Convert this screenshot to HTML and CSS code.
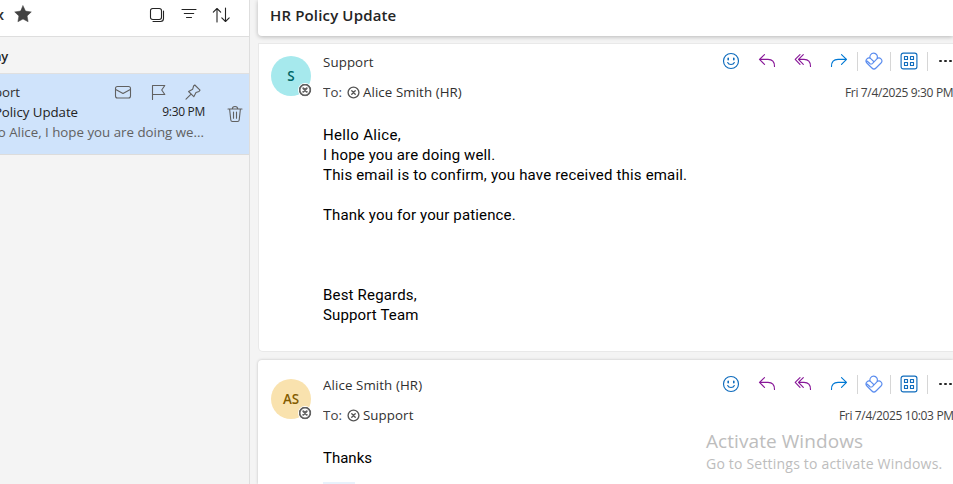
FILE: index.html
```html
<!DOCTYPE html>
<html lang="en">
<head>
<meta charset="utf-8">
<title>Mail</title>
<link rel="stylesheet" href="styles.css">
</head>
<body>
<svg class="defs" width="0" height="0" aria-hidden="true">
  <symbol id="smile" viewBox="0 0 18 18"><circle cx="9" cy="9" r="7.5"/><path d="M5.7 10.5c.9 2.6 5.7 2.6 6.6 0"/><path d="M6.2 6.2v1.6M11.8 6.2v1.6" stroke-width="1.6"/></symbol>
  <symbol id="reply" viewBox="0 0 18 18"><path d="M6.5 2.6 1.5 7.4l5 5M1.8 7.4H10q6.5 0 6.5 7"/></symbol>
  <symbol id="replyall" viewBox="0 0 18 18"><path d="M6 2.6 1.2 7.4l4.8 5M9.3 2.6 4.5 7.4l4.8 5M4.8 7.4H10q6.5 0 6.5 7"/></symbol>
  <symbol id="forward" viewBox="0 0 18 18"><path d="m11.5 2.6 5 4.8-5 5M16.2 7.4H8q-6.5 0-6.5 7"/></symbol>
  <symbol id="loop" viewBox="0 0 18 18"><path d="M5.2 6.2A3.7 3.7 0 1 1 12 6.4M8.7 9.5 6 6.9a2.9 2.9 0 0 0-4.1 4.1l5 5a2.9 2.9 0 0 0 4.1 0l5-5a2.9 2.9 0 0 0-4.1-4.1l-4.3 4.4a2.2 2.2 0 0 1-3 0L2 9"/></symbol>
  <symbol id="apps" viewBox="0 0 18 18"><rect x="1.1" y="1.1" width="15.8" height="15.8" rx="2.2"/><path d="M4.5 4.5h3v3h-3zM10.5 4.5h3v3h-3zM4.5 10.5h3v3h-3zM10.5 10.5h3v3h-3z"/></symbol>
  <symbol id="away" viewBox="0 0 12 12"><circle cx="6" cy="6" r="5"/><path d="m4.4 4.4 3.2 3.2m0-3.2L4.4 7.6"/></symbol>
</svg>
<main class="app">
  <aside class="list">
    <header class="list-head">
      <div class="folder"><b>Inbox</b></div>
      <svg class="star" viewBox="0 0 18 18"><path d="m9 .8 2.5 5.3 5.8.8-4.2 4 1 5.8L9 14l-5.1 2.7 1-5.8-4.2-4 5.8-.8z"/></svg>
      <div class="head-tools">
        <svg width="16" height="16" viewBox="0 0 16 16"><rect x="1.5" y="1.5" width="11" height="11" rx="2.2"/><path d="M4 14.5h7.5q3 0 3-3V4"/></svg>
        <svg width="16" height="16" viewBox="0 0 16 16"><path d="M1 2.5h14M3.3 6.5h9.4M5.5 10.5h5"/></svg>
        <svg width="18" height="16" viewBox="0 0 18 16"><path d="M5 15V1.5M1.3 5.2 5 1.5l3.7 3.7M13.5 1v13.5M9.8 10.8l3.7 3.7 3.7-3.7"/></svg>
      </div>
    </header>
    <div class="group"><div class="group-name">Today</div></div>
    <article class="item">
      <div class="item-text">
        <div class="row">
          <div class="clip sender"><span>Support</span></div>
          <div class="item-tools">
            <svg width="18" height="18" viewBox="0 0 18 18"><rect x="1.5" y="3.5" width="15" height="11.5" rx="2"/><path d="m1.7 6.5 7.3 4 7.3-4"/></svg>
            <svg width="18" height="18" viewBox="0 0 18 18"><path d="M3.5 16.5v-14h12.3l-3.1 4.5 3.1 4.5H3.5"/></svg>
            <svg width="18" height="18" viewBox="0 0 18 18"><path d="m10.8 2 5.2 5.2-1 1.3-3 1.1-2.2 4.1-5.2-5.2 4.1-2.3L9.6 3zM7.1 11.1 2 16.2"/></svg>
          </div>
        </div>
        <div class="row">
          <div class="clip subject"><span>HR Policy Update</span></div>
          <time class="item-time">9:30 PM</time>
        </div>
        <div class="row"><div class="clip preview"><span>Hello Alice, I hope you are doing we...</span></div></div>
      </div>
      <svg class="trash" width="16" height="18" viewBox="0 0 16 18"><path d="M1 4h14M5.3 4q0-2.5 2.7-2.5T10.7 4M2.6 4l1.2 11q.2 1.5 1.6 1.5h5.2q1.4 0 1.6-1.5L13.4 4M6.5 7v6.2M9.5 7v6.2"/></svg>
    </article>
  </aside>

  <section class="reader">
    <h1 class="title"><span>HR Policy Update</span></h1>
    <article class="mail first">
      <div class="avatar teal"><span>S</span><svg class="badge"><use href="#away"/></svg></div>
      <div class="content">
        <div class="top">
          <span class="from">Support</span>
          <div class="actions">
            <svg class="blue"><use href="#smile"/></svg><svg class="purple"><use href="#reply"/></svg><svg class="purple"><use href="#replyall"/></svg><svg class="azure"><use href="#forward"/></svg>
            <i></i><svg class="peri"><use href="#loop"/></svg><i></i><svg class="blue"><use href="#apps"/></svg><i></i><span class="more"><b></b><b></b><b></b></span>
          </div>
        </div>
        <div class="to"><span class="label">To:</span><svg><use href="#away"/></svg><span class="r1">Alice Smith (HR)</span><time>Fri 7/4/2025 9:30 PM</time></div>
        <div class="body">
          <p class="b1">Hello Alice,</p>
          <p class="b2">I hope you are doing well.</p>
          <p class="b3">This email is to confirm, you have received this email.</p>
          <p>&nbsp;</p>
          <p class="b2">Thank you for your patience.</p>
          <p>&nbsp;</p><p>&nbsp;</p><p>&nbsp;</p>
          <p class="b3">Best Regards,</p>
          <p class="b2">Support Team</p>
        </div>
      </div>
    </article>
    <article class="mail second">
      <div class="avatar gold"><span>AS</span><svg class="badge"><use href="#away"/></svg></div>
      <div class="content">
        <div class="top">
          <span class="from">Alice Smith (HR)</span>
          <div class="actions">
            <svg class="blue"><use href="#smile"/></svg><svg class="purple"><use href="#reply"/></svg><svg class="purple"><use href="#replyall"/></svg><svg class="azure"><use href="#forward"/></svg>
            <i></i><svg class="peri"><use href="#loop"/></svg><i></i><svg class="blue"><use href="#apps"/></svg><i></i><span class="more"><b></b><b></b><b></b></span>
          </div>
        </div>
        <div class="to"><span class="label">To:</span><svg><use href="#away"/></svg><span class="r2">Support</span><time>Fri 7/4/2025 10:03 PM</time></div>
        <div class="body"><p>Thanks</p></div>
        <div class="quote"></div>
      </div>
    </article>
  </section>
  <div class="watermark"><div class="w1">Activate Windows</div><div class="w2">Go to Settings to activate Windows.</div></div>
</main>
</body>
</html>
```
FILE: styles.css
```css
* { box-sizing: border-box; }
body, p, h1 { margin: 0; }
body { font-family: "Open Sans", "Noto Sans", sans-serif; font-size: 13.3px; color: #303030; overflow: hidden; }
svg { fill: none; stroke: #424242; stroke-width: 1.1; flex: none; stroke-linecap: round; stroke-linejoin: round; }
.defs { position: absolute; }
.app { display: flex; width: 953px; height: 484px; overflow: hidden; background: #f4f4f4; position: relative; white-space: nowrap; }

.list { width: 250px; flex: none; border-right: 1px solid #dedede; overflow: hidden; background: #f4f4f4; }
.list-head { height: 37px; background: #fff; border-bottom: 1px solid #dedede; display: flex; align-items: flex-start; padding-top: 6px; }
.folder { width: 4px; display: flex; justify-content: flex-end; font-size: 15px; line-height: 17px; }
.folder b { font-weight: 600; }
.star { width: 18px; height: 18px; margin: -1px 0 0 10px; fill: #424242; stroke-width: .5; }
.head-tools { display: flex; gap: 16px; margin: 1px 0 0 117px; }
.head-tools svg { stroke: #242424; }
.head-tools svg:last-child { margin-left: -1px; }
.group { height: 37px; border-bottom: 1px solid #e0e0e0; display: flex; align-items: center; }
.group-name { width: 8px; display: flex; justify-content: flex-end; font-weight: 600; font-size: 13px; letter-spacing: -.2px; color: #242424; padding-top: 1px; }
.item { height: 81px; background: #cfe3fb; border-bottom: 1px solid #dcdcdc; display: flex; padding-top: 8px; }
.item-text { width: 205px; }
.row { height: 20px; line-height: 20px; display: flex; justify-content: space-between; align-items: center; }
.clip { display: flex; justify-content: flex-end; flex: none; }
.sender { width: 20px; letter-spacing: -.05px; }
.subject { width: 78px; letter-spacing: -.05px; color: #242424; }
.preview { width: 204px; color: #616161; }
.item-tools { display: flex; gap: 17px; margin-right: 3px; }
.item-tools svg, .trash { stroke: #616161; }
.item-time { font-size: 12px; letter-spacing: -.3px; color: #242424; }
.trash { margin: 23px 0 0 22px; }

.reader { flex: 1; min-width: 0; padding-left: 8px; overflow: hidden; }
.title { height: 36px; background: #fff; border-radius: 0 0 0 4px; box-shadow: 0 1px 4px #00000040; padding: 4px 12px; font-size: 15px; line-height: 22px; letter-spacing: .15px; font-weight: 600; color: #242424; }
.mail { background: #fff; display: flex; padding-left: 13px; }
.first { height: 307px; margin: 8px 0 0 1px; padding-left: 12px; box-shadow: 0 0 0 1px #e9e9e9; border-radius: 0 0 0 4px; }
.second { height: 124px; margin-top: 9px; box-shadow: 0 0 3px #00000038; border-radius: 4px 0 0 0; }
.avatar { width: 40px; height: 40px; border-radius: 50%; margin-top: 12px; display: flex; align-items: center; justify-content: center; font-weight: 600; font-size: 13.4px; line-height: 18px; padding-bottom: 1px; position: relative; flex: none; }
.second .avatar { margin-top: 19px; }
.teal { background: #a6e9ed; color: #006666; }
.gold { background: #f9e2ae; color: #835b00; }
.badge { position: absolute; right: -1px; bottom: -1px; width: 14px; height: 14px; background: #fff; border-radius: 50%; padding: .5px; stroke: #616161; stroke-width: 1.8; }
.content { flex: 1; min-width: 0; margin-left: 12px; padding-top: 7px; overflow: hidden; }
.second .content { padding-top: 14px; }
.top { display: flex; height: 22px; align-items: center; }
.from { width: 399px; flex: none; letter-spacing: .1px; }
.actions { display: flex; align-items: center; flex: none; margin-top: -2px; }
.actions svg { width: 18px; height: 18px; margin-right: 18px; stroke-width: 1.15; }
.actions .azure { margin-right: 9px; }
.actions i { width: 1px; height: 19px; background: #d6d6d6; }
.actions .peri { margin: 0 7px; }
.actions i + .blue { margin: 0 9px; }
.blue { stroke: #0f6cbd; }
.purple { stroke: #881798; }
.azure { stroke: #0078d4; }
.actions .peri { stroke: #5b8def; }
.more { display: flex; gap: 2.5px; margin-left: 11px; }
.more b { width: 2.5px; height: 2.5px; border-radius: 1px; background: #242424; }
.to { display: flex; align-items: center; height: 22px; margin-top: 8px; letter-spacing: .08px; }
.label { width: 24px; flex: none; color: #424242; }
.to svg { width: 13px; height: 13px; margin-right: 3px; stroke: #555; stroke-width: 1.25; }
.to time { font-size: 12px; color: #424242; flex: none; letter-spacing: -.35px; }
.r1 { width: 482px; flex: none; }
.r2 { width: 476px; flex: none; }
.body { font-family: Roboto, sans-serif; font-size: 15px; line-height: 20px; color: #000; padding-top: 22px; }
.body p { height: 20px; }
.b1 { letter-spacing: .33px; }
.b2 { letter-spacing: .14px; }
.b3 { letter-spacing: .18px; }
.quote { width: 32px; height: 20px; margin-top: 14px; background: #e8f2fc; }
.watermark { position: absolute; left: 706px; top: 429px; color: #bdbdbd; }
.w1 { font-size: 19px; line-height: 25px; letter-spacing: .07px; }
.w2 { font-size: 14px; line-height: 20px; letter-spacing: .2px; }
```
